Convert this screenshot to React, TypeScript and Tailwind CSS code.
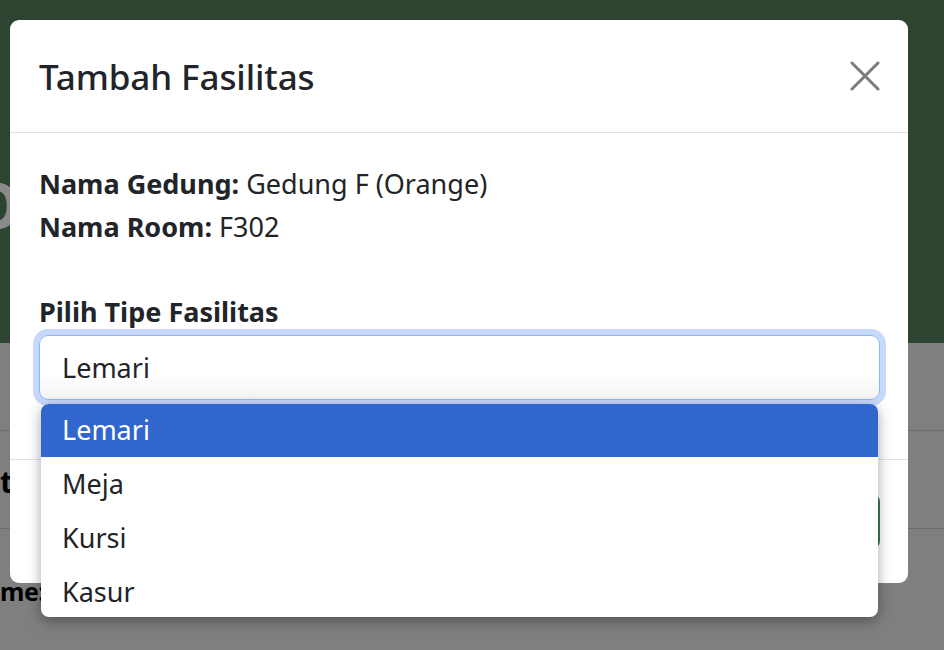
import { useState } from 'react';

const options = ['Lemari', 'Meja', 'Kursi', 'Kasur'];

const App = () => {
  const [selected, setSelected] = useState('Lemari');

  return (
    <div className="relative w-[944px] h-[650px] overflow-hidden bg-[#7f7f7f] text-[#212529] font-['Noto_Sans',_sans-serif]">
      {/* Page behind the backdrop */}
      <div className="flex flex-col">
        <div className="h-[343px] bg-[#2d4530] flex items-center">
          <span className="-ml-[30px] mt-[66px] text-[64px] font-bold text-[#8a8a8a] leading-none">O</span>
        </div>
        <div className="h-[88px] border-b border-[#6c6c6c]" />
        <div className="h-[98px] border-b border-[#6c6c6c] flex items-center">
          <span className="ml-[0px] mt-[4px] text-[30px] font-bold text-black leading-none">t</span>
        </div>
        <div className="h-[121px] flex items-center">
          <span className="ml-[0px] mt-[4px] text-[25px] font-bold text-black leading-none tracking-[-0.5px]">me:</span>
        </div>
      </div>

      {/* Modal */}
      <div className="absolute left-[10px] top-[20px] w-[898px] h-[563px] bg-white rounded-[9px] flex flex-col">
        <div className="h-[113px] pl-[29px] pr-[28px] flex items-center justify-between border-b border-[#dee2e6]">
          <h5 className="text-[35px] font-medium leading-none tracking-[-0.1px]">Tambah Fasilitas</h5>
          <button className="w-[30px] h-[30px] flex items-center justify-center">
            <svg width="30" height="30" viewBox="0 0 30 30" fill="none" stroke="#7b7b7b" strokeWidth="3" strokeLinecap="round">
              <path d="M2 2L28 28M28 2L2 28" />
            </svg>
          </button>
        </div>

        <div className="flex-1 pl-[29px] pr-[28px] pt-[29px] text-[27px] leading-[43px]">
          <p>
            <span className="font-bold">Nama Gedung:</span> Gedung F (Orange)
          </p>
          <p>
            <span className="font-bold">Nama Room:</span> F302
          </p>
          <label className="block mt-[42px] font-bold">Pilih Tipe Fasilitas</label>
          <div className="mt-[2px] h-[65px] rounded-[9px] border border-[#86b7fe] ring-[6px] ring-[#c8d8fb] bg-gradient-to-b from-white from-60% to-[#f3f3f3] flex items-center pl-[22px]">
            {selected}
          </div>
        </div>

        <div className="h-[124px] border-t border-[#dee2e6] flex items-center justify-end pl-[29px] pr-[28px]">
          <button className="h-[57px] w-[140px] rounded-[9px] bg-[#3e7a53] text-white text-[27px]">Simpan</button>
        </div>
      </div>

      {/* Open select list */}
      <ul className="absolute left-[41px] top-[404px] w-[837px] h-[213px] rounded-[8px] bg-white overflow-hidden shadow-[0_4px_14px_rgba(0,0,0,0.35)] text-[27px]">
        {options.map((o) => (
          <li
            key={o}
            onClick={() => setSelected(o)}
            className={
              o === selected
                ? 'h-[53px] pl-[21px] flex items-center bg-[#3166cc] text-white'
                : 'h-[54px] pl-[21px] flex items-center text-[#212529]'
            }
          >
            {o}
          </li>
        ))}
      </ul>
    </div>
  );
};

export default App;
